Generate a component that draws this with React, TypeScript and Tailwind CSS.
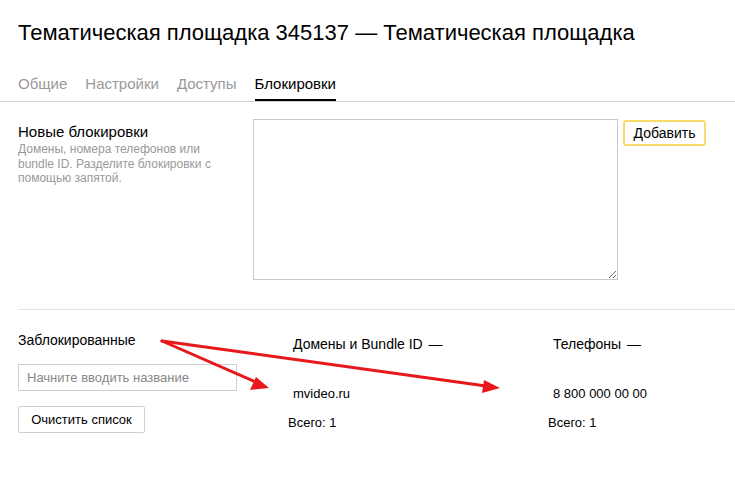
import React from 'react';

const tabs = ['Общие', 'Настройки', 'Доступы', 'Блокировки'];

function Arrows() {
  // hand-drawn red annotation arrows over the page
  return (
    <svg className="pointer-events-none absolute left-0 top-0" width="735" height="477">
      <g stroke="#e8171b" strokeWidth="3" strokeLinecap="round" fill="none">
        <line x1="162" y1="341" x2="258" y2="383" />
        <line x1="162" y1="341" x2="486" y2="386" />
      </g>
      <polygon points="269,388 250,390 256,377" fill="#e8171b" />
      <polygon points="500,388 482,393 484,380" fill="#e8171b" />
    </svg>
  );
}

export default function App() {
  return (
    <div className="relative h-[477px] w-[735px] overflow-hidden bg-white font-['Liberation_Sans',Arial,sans-serif] text-[#000]">
      <h1 className="ml-[18px] mt-[21px] text-[22px] leading-[24px] text-black">
        Тематическая площадка 345137 — Тематическая площадка
      </h1>

      <div className="mt-[30px] flex gap-[18px] border-b border-[#d0d0d0] px-[18px]">
        {tabs.map((t, i) => (
          <div
            key={t}
            className={
              i === 3
                ? 'border-b-2 border-black pb-[6px] text-[15px] leading-[18px] text-black'
                : 'pb-[8px] text-[15px] leading-[18px] text-[#999]'
            }
          >
            {t}
          </div>
        ))}
      </div>

      <div className="flex px-[18px] pt-[18px]">
        <div className="w-[235px] pt-[3px]">
          <div className="text-[15px] leading-[18px]">Новые блокировки</div>
          <div className="mt-[1px] w-[205px] text-[12px] leading-[14.5px] text-[#999]">
            Домены, номера телефонов или bundle ID. Разделите блокировки с помощью запятой.
          </div>
        </div>
        <textarea className="-mt-px h-[161px] w-[365px] border border-[#c8c8c8] bg-white outline-none" />
        <button className="ml-[5px] h-[26px] w-[83px] rounded-[3px] border-2 border-[#f7dc6b] text-[14px] text-black">
          Добавить
        </button>
      </div>

      <div className="ml-[18px] mt-[29px] border-t border-[#e4e4e4]" />

      <div className="flex px-[18px] pt-[21px]">
        <div className="w-[219px]">
          <div className="text-[14px] leading-[18px]">Заблокированные</div>
          <input
            className="mt-[15px] h-[27px] w-[219px] border border-[#cfcfcf] px-[8px] text-[13px] placeholder:text-[#888] outline-none"
            placeholder="Начните вводить название"
          />
          <button className="mt-[15px] h-[27px] w-[127px] rounded-[2px] border border-[#cfcfcf] text-[13px] text-black">
            Очистить список
          </button>
        </div>

        <div className="ml-[51px] flex">
          {[
            { head: 'Домены и Bundle ID', value: 'mvideo.ru' },
            { head: 'Телефоны', value: '8 800 000 00 00' },
          ].map((c) => (
            <div key={c.head} className="w-[260px] pt-[4px]">
              <div className="ml-[5px] text-[14px] leading-[18px]">
                {c.head} <span className="ml-[2px]">—</span>
              </div>
              <div className="ml-[5px] mt-[33px] text-[13px] leading-[16px]">{c.value}</div>
              <div className="mt-[13px] text-[13px] leading-[16px]">Всего: 1</div>
            </div>
          ))}
        </div>
      </div>

      <Arrows />
    </div>
  );
}
